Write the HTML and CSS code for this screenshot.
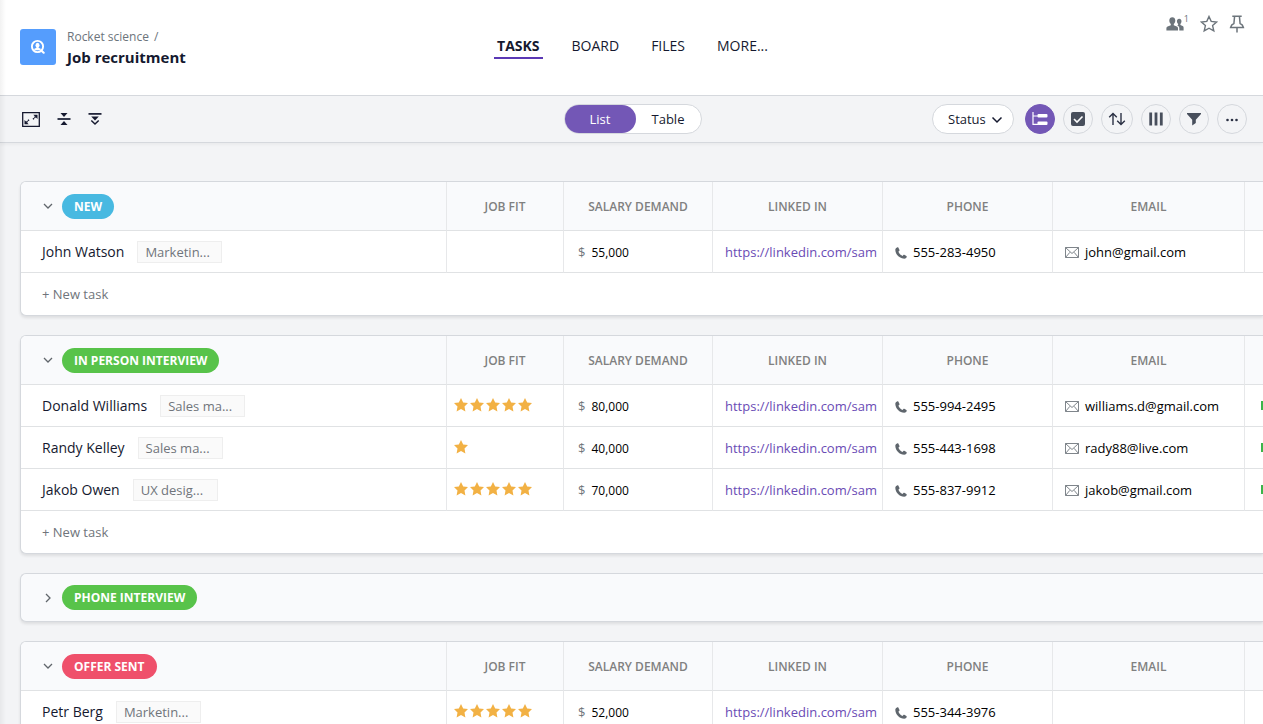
FILE: index.html
```html
<!DOCTYPE html>
<html lang="en">
  <head>
    <title>Job recruitment</title>
    <meta charset="utf-8">
    <link rel="stylesheet" href="styles.css">
  </head>
  <body>
    <!-- shared icons -->
    <svg class="sprite" aria-hidden="true">
      <symbol id="star" viewBox="0 0 14 14"><path d="M7 0l2.200 4.500 4.800.6-3.500 3.400.9 4.900L7 11.100l-4.400 2.300.9-4.900L0 5.100l4.800-.6z" fill="#f2b144"/></symbol>
      <symbol id="phone" viewBox="0 0 12 12"><path d="M2.400.3C1.300.7.3 1.700.3 2.700.4 7.400 4.600 11.700 9.300 11.700c1.100 0 2-.8 2.400-1.700.1-.4 0-.7-.3-.9L9.300 7.800c-.3-.2-.7-.1-.9.1l-.9 1C5.700 8.200 4.100 6.500 3.400 4.700l.9-.9c.3-.2.300-.5.200-.8L3.300.6C3.100.3 2.800.2 2.400.3z" fill="#5f666d"/></symbol>
      <symbol id="mail" viewBox="0 0 14 11"><path d="M.5.5h13v10H.5zM.5.5L7 6.500 13.500.5M.7 10.300l4.200-5M13.300 10.300l-4.200-5" fill="none" stroke="#70777e" stroke-width=".9"/></symbol>
      <symbol id="down" viewBox="0 0 10 10"><path d="M1 3l4 4 4-4" fill="none" stroke="#61666c" stroke-width="1.300"/></symbol>
      <symbol id="right" viewBox="0 0 10 10"><path d="M3 1l4 4-4 4" fill="none" stroke="#61666c" stroke-width="1.300"/></symbol>
    </svg>

    <header class="header">
      <div class="project">
        <div class="project-icon">
          <svg width="16" height="16" viewBox="0 0 16 16"><circle cx="7.500" cy="7.500" r="5.600" fill="none" stroke="#fff" stroke-width="1.900"/><path d="M11.500 11.700l2.200 2" stroke="#fff" stroke-width="2.200" stroke-linecap="round"/><ellipse cx="7.500" cy="6.200" rx="2" ry="2.500" fill="#fff"/><path d="M6.600 7h1.800v1.800l2.300 1v1.400H4.300V9.800l2.300-1z" fill="#fff"/></svg>
        </div>
        <div>
          <div class="crumbs"><a href="#">Rocket science</a> <span>/</span></div>
          <h1 class="title">Job recruitment</h1>
        </div>
      </div>
      <nav class="tabs">
        <a href="#" class="tab active">TASKS</a>
        <a href="#" class="tab">BOARD</a>
        <a href="#" class="tab">FILES</a>
        <a href="#" class="tab">MORE...</a>
      </nav>
      <div class="actions">
        <button class="icon-btn people" aria-label="Members">
          <svg width="18" height="16" viewBox="0 0 18 16"><g fill="#6c747b"><path d="M3.300 4.500C3.300 2.400 4.500 1.200 6.300 1.200s3 1.200 3 3.300c0 1.500-.6 2.700-1.500 3.500v1.200l3 1.300c.9.400 1.200 1 1.200 2V14.500H.4v-2c0-1 .4-1.600 1.300-2l3.100-1.300V8c-.9-.8-1.500-2-1.500-3.500z"/><path d="M10.900 5.300c0-1.600.9-2.600 2.300-2.600s2.300 1 2.300 2.600c0 1.100-.4 2-1.100 2.600V9l2.200 1c.8.400 1 .9 1 1.700v2.800h-4.300v-2.300c0-1.100-.5-1.900-1.500-2.400l-.7-.3 1-.4V7.900c-.8-.6-1.200-1.500-1.200-2.600z"/></g></svg>
          <sup>1</sup>
        </button>
        <button class="icon-btn" aria-label="Favorite">
          <svg width="18" height="18" viewBox="0 0 18 18"><path d="M9 1.500l2.200 4.900 5.400.6-4 3.600 1.200 5.300L9 13.200l-4.800 2.700 1.200-5.300-4-3.600 5.400-.6z" fill="none" stroke="#6c747b" stroke-width="1.400"/></svg>
        </button>
        <button class="icon-btn" aria-label="Pin">
          <svg width="16" height="18" viewBox="0 0 16 18"><path d="M3.300 1.200h9.400M5.600 1.200L4.900 8.500C3 9.200 2 10.500 1.600 12.500h12.800C14 10.500 13 9.200 11.100 8.500l-.7-7.300M8 12.500V17.500" fill="none" stroke="#6c747b" stroke-width="1.500"/></svg>
        </button>
      </div>
    </header>

    <div class="toolbar">
      <div class="tools-left">
        <button class="icon-btn" aria-label="Full screen">
          <svg width="18" height="15" viewBox="0 0 18 15"><path d="M.7.7h16.600v13.600H.7z" fill="none" stroke="#15192f" stroke-width="1.300"/><path d="M11.300 2.700h4.200v4.200zM2.500 8.100v4.200h4.200z" fill="#15192f"/><path d="M11 7.200l3-3M7 7.800l-3 3" stroke="#15192f" stroke-width="1.400" stroke-dasharray="1.500 .5"/></svg>
        </button>
        <button class="icon-btn" aria-label="Collapse all">
          <svg width="14" height="14" viewBox="0 0 14 14"><path d="M.5 7h13" stroke="#15192f" stroke-width="1.700"/><path d="M3.500 1h7L7 5zM3.500 13h7L7 9z" fill="#15192f"/></svg>
        </button>
        <button class="icon-btn" aria-label="Expand all">
          <svg width="14" height="14" viewBox="0 0 14 14"><path d="M.5 1.900h13" stroke="#15192f" stroke-width="1.700"/><path d="M3.200 4.500h7.600L7 8.500z" fill="#15192f"/><path d="M3.300 8.500L7 12l3.700-3.500" fill="none" stroke="#15192f" stroke-width="1.500"/></svg>
        </button>
      </div>
      <div class="switch">
        <button class="switch-btn on">List</button>
        <button class="switch-btn">Table</button>
      </div>
      <div class="tools-right">
        <div class="status">
          <select aria-label="Group by"><option>Status</option></select>
          <svg width="12" height="12" viewBox="0 0 12 12"><path d="M1.500 4.500L6 9l4.500-4.500" fill="none" stroke="#15192f" stroke-width="1.500"/></svg>
        </div>
        <button class="round on" aria-label="Subtasks">
          <svg width="18" height="16" viewBox="0 0 18 16"><path d="M2 1v12.300h5M2 5h5" fill="none" stroke="#fff" stroke-width="1.200"/><rect x="6.500" y="3" width="10" height="3.500" rx="1" fill="#fff"/><rect x="6.500" y="10.500" width="10" height="3.500" rx="1" fill="#fff"/></svg>
        </button>
        <button class="round" aria-label="Select tasks">
          <svg width="14" height="14" viewBox="0 0 14 14"><rect width="14" height="14" rx="2" fill="#484f5c"/><path d="M3 7l3 3 5.500-5.500" fill="none" stroke="#fff" stroke-width="1.600"/></svg>
        </button>
        <button class="round sort" aria-label="Sort">
          <svg width="18" height="14" viewBox="0 0 18 14"><path d="M5 13V1.500M1.200 5.300L5 1.500l3.800 3.800M13 1v11.500M9.200 8.700l3.800 3.800 3.800-3.800" fill="none" stroke="#2b3144" stroke-width="1.400"/></svg>
        </button>
        <button class="round" aria-label="Columns">
          <svg width="14" height="14" viewBox="0 0 14 14"><path d="M1.700.5v13M7 .5v13M12.300.5v13" stroke="#484f5c" stroke-width="2.800"/></svg>
        </button>
        <button class="round" aria-label="Filter">
          <svg width="14" height="14" viewBox="0 0 14 14"><path d="M0 1h14v1L8.800 7.800V11l-3.600 2.500V7.800L0 2z" fill="#484f5c"/></svg>
        </button>
        <button class="round" aria-label="More">
          <svg width="14" height="14" viewBox="0 0 14 14"><g fill="#2b3144"><circle cx="2.500" cy="8" r="1.300"/><circle cx="7" cy="8" r="1.300"/><circle cx="11.500" cy="8" r="1.300"/></g></svg>
        </button>
      </div>
    </div>

    <main class="board">
      <section class="group">
        <table>
          <colgroup><col><col class="c-fit"><col class="c-salary"><col class="c-link"><col class="c-phone"><col class="c-email"><col class="c-more"></colgroup>
          <thead>
            <tr>
              <th><div class="group-head"><button class="toggle" aria-label="Collapse"><svg width="10" height="10"><use href="#down"/></svg></button><span class="pill blue">NEW</span></div></th>
              <th>JOB FIT</th><th>SALARY DEMAND</th><th>LINKED IN</th><th>PHONE</th><th>EMAIL</th><th></th>
            </tr>
          </thead>
          <tbody>
            <tr>
              <td><div class="name">John Watson <span class="tag">Marketin...</span></div></td>
              <td></td>
              <td><span class="cur">$</span>55,000</td>
              <td><a class="link" href="#">https://linkedin.com/sam</a></td>
              <td><div class="contact"><svg width="12" height="12"><use href="#phone"/></svg>555-283-4950</div></td>
              <td><div class="contact"><svg width="14" height="11"><use href="#mail"/></svg>john@gmail.com</div></td>
              <td></td>
            </tr>
          </tbody>
        </table>
        <button class="new-task">+ New task</button>
      </section>

      <section class="group">
        <table>
          <colgroup><col><col class="c-fit"><col class="c-salary"><col class="c-link"><col class="c-phone"><col class="c-email"><col class="c-more"></colgroup>
          <thead>
            <tr>
              <th><div class="group-head"><button class="toggle" aria-label="Collapse"><svg width="10" height="10"><use href="#down"/></svg></button><span class="pill green">IN PERSON INTERVIEW</span></div></th>
              <th>JOB FIT</th><th>SALARY DEMAND</th><th>LINKED IN</th><th>PHONE</th><th>EMAIL</th><th></th>
            </tr>
          </thead>
          <tbody>
            <tr>
              <td><div class="name">Donald Williams <span class="tag">Sales ma...</span></div></td>
              <td><div class="stars"><svg><use href="#star"/></svg><svg><use href="#star"/></svg><svg><use href="#star"/></svg><svg><use href="#star"/></svg><svg><use href="#star"/></svg></div></td>
              <td><span class="cur">$</span>80,000</td>
              <td><a class="link" href="#">https://linkedin.com/sam</a></td>
              <td><div class="contact"><svg width="12" height="12"><use href="#phone"/></svg>555-994-2495</div></td>
              <td><div class="contact"><svg width="14" height="11"><use href="#mail"/></svg>williams.d@gmail.com</div></td>
              <td><div class="bar"></div></td>
            </tr>
            <tr>
              <td><div class="name">Randy Kelley <span class="tag">Sales ma...</span></div></td>
              <td><div class="stars"><svg><use href="#star"/></svg></div></td>
              <td><span class="cur">$</span>40,000</td>
              <td><a class="link" href="#">https://linkedin.com/sam</a></td>
              <td><div class="contact"><svg width="12" height="12"><use href="#phone"/></svg>555-443-1698</div></td>
              <td><div class="contact"><svg width="14" height="11"><use href="#mail"/></svg>rady88@live.com</div></td>
              <td><div class="bar"></div></td>
            </tr>
            <tr>
              <td><div class="name">Jakob Owen <span class="tag">UX desig...</span></div></td>
              <td><div class="stars"><svg><use href="#star"/></svg><svg><use href="#star"/></svg><svg><use href="#star"/></svg><svg><use href="#star"/></svg><svg><use href="#star"/></svg></div></td>
              <td><span class="cur">$</span>70,000</td>
              <td><a class="link" href="#">https://linkedin.com/sam</a></td>
              <td><div class="contact"><svg width="12" height="12"><use href="#phone"/></svg>555-837-9912</div></td>
              <td><div class="contact"><svg width="14" height="11"><use href="#mail"/></svg>jakob@gmail.com</div></td>
              <td><div class="bar"></div></td>
            </tr>
          </tbody>
        </table>
        <button class="new-task">+ New task</button>
      </section>

      <section class="group closed">
        <div class="group-head"><button class="toggle" aria-label="Expand"><svg width="10" height="10"><use href="#right"/></svg></button><span class="pill green">PHONE INTERVIEW</span></div>
      </section>

      <section class="group">
        <table>
          <colgroup><col><col class="c-fit"><col class="c-salary"><col class="c-link"><col class="c-phone"><col class="c-email"><col class="c-more"></colgroup>
          <thead>
            <tr>
              <th><div class="group-head"><button class="toggle" aria-label="Collapse"><svg width="10" height="10"><use href="#down"/></svg></button><span class="pill red">OFFER SENT</span></div></th>
              <th>JOB FIT</th><th>SALARY DEMAND</th><th>LINKED IN</th><th>PHONE</th><th>EMAIL</th><th></th>
            </tr>
          </thead>
          <tbody>
            <tr>
              <td><div class="name">Petr Berg <span class="tag">Marketin...</span></div></td>
              <td><div class="stars"><svg><use href="#star"/></svg><svg><use href="#star"/></svg><svg><use href="#star"/></svg><svg><use href="#star"/></svg><svg><use href="#star"/></svg></div></td>
              <td><span class="cur">$</span>52,000</td>
              <td><a class="link" href="#">https://linkedin.com/sam</a></td>
              <td><div class="contact"><svg width="12" height="12"><use href="#phone"/></svg>555-344-3976</div></td>
              <td></td>
              <td></td>
            </tr>
          </tbody>
        </table>
      </section>
    </main>
  </body>
</html>
```

FILE: styles.css
```css
*{
  box-sizing: border-box;
}

body{
  margin: 0;
  height: 100vh;
  display: flex;
  flex-direction: column;
  overflow: hidden;
  background: #f3f4f6;
  color: #15192f;
  font-family: "Open Sans", "Noto Sans", sans-serif;
  font-size: 14px;
}

/* shade along the left edge of the page */
body::after{
  content: "";
  position: absolute;
  top: 0;
  bottom: 0;
  left: 0;
  width: 6px;
  background: linear-gradient(to right, rgba(0,0,0,.05), rgba(0,0,0,0));
  pointer-events: none;
}

a{
  color: inherit;
  text-decoration: none;
}

button, select{
  font: inherit;
  color: inherit;
  border: 0;
  padding: 0;
  background: none;
  cursor: pointer;
}

svg{
  display: block;
  flex: none;
}

.sprite{
  position: absolute;
  width: 0;
  height: 0;
}

.header{
  flex: none;
  display: grid;
  grid-template-columns: 1fr auto 1fr;
  height: 95px;
  padding: 0 18px 2px 20px;
  background: #fff;
}

.project{
  display: flex;
  align-items: center;
  gap: 11px;
}

.project-icon{
  width: 36px;
  height: 36px;
  padding: 10px;
  border-radius: 3px;
  background: #559dfd;
}

.crumbs{
  color: #6c747b;
  font-size: 12px;
  line-height: 20px;
}

.crumbs span{
  margin-left: 2px;
}

.title{
  margin: 0;
  font-size: 15px;
  line-height: 20px;
}

.tabs{
  display: flex;
  align-items: center;
  gap: 26px;
}

.tab{
  padding: 0 3px;
  line-height: 22px;
  border-bottom: 2px solid transparent;
}

.active{
  font-weight: 700;
  border-color: #5a38b4;
}

.actions{
  display: flex;
  justify-content: flex-end;
  align-items: center;
  align-self: start;
  gap: 11px;
  padding-top: 15px;
}

.people{
  display: flex;
}

.people sup{
  font-size: 9px;
  line-height: 6px;
  color: #6c747b;
}

.toolbar{
  flex: none;
  display: grid;
  grid-template-columns: 1fr auto 1fr;
  align-items: center;
  height: 48px;
  padding: 0 16px 0 18px;
  border-top: 1px solid #d5d8dd;
  border-bottom: 1px solid #d5d8dd;
  box-shadow: 0 2px 3px rgba(0,0,0,.04);
}

.tools-left, .tools-right{
  display: flex;
  align-items: center;
}

.tools-left{
  gap: 17px;
  padding-left: 4px;
}

.tools-right{
  justify-content: flex-end;
  gap: 8px;
}

.switch{
  display: flex;
  border: 1px solid #d5d8dd;
  border-radius: 15px;
  background: #fff;
  font-size: 13px;
}

.switch-btn{
  width: 65px;
  height: 28px;
  border-radius: 14px;
}

.switch-btn.on{
  width: 71px;
  background: #7357b6;
  color: #fff;
}

.status{
  display: flex;
  align-items: center;
  height: 30px;
  margin-right: 3px;
  padding: 0 10px 0 15px;
  border: 1px solid #d5d8dd;
  border-radius: 15px;
  background: #fff;
  font-size: 13px;
}

.status select{
  appearance: none;
  width: 43px;
}

.round{
  display: flex;
  align-items: center;
  justify-content: center;
  width: 30px;
  height: 30px;
  border: 1px solid #d5d8dd;
  border-radius: 16px;
}

.round.on{
  border-color: #7357b6;
  background: #7357b6;
}

.sort{
  width: 32px;
}

.board{
  flex: 1;
  min-height: 0;
  padding: 38px 0 0 20px;
}

.group{
  margin-bottom: 19px;
  overflow: hidden;
  border: 1px solid #d5d8dd;
  border-right: 0;
  border-radius: 6px 0 0 6px;
  background: #fff;
  box-shadow: 0 2px 3px rgba(0,0,0,.09);
}

/* the last column runs out past the right edge */
table{
  width: calc(100% + 100px);
  table-layout: fixed;
  border-collapse: separate;
  border-spacing: 0;
}

.c-fit{ width: 117px; }
.c-salary{ width: 149px; }
.c-link{ width: 170px; }
.c-phone{ width: 170px; }
.c-email{ width: 192px; }
.c-more{ width: 119px; }

th, td{
  padding: 0 12px;
  border-left: 1px solid #e7e8ea;
  border-bottom: 1px solid #e0e2e4;
}

th:first-child, td:first-child{
  padding: 0 21px;
  border-left: 0;
}

th{
  height: 49px;
  background: #f9fafc;
  color: #808080;
  font-size: 12px;
  font-weight: 600;
}

td{
  height: 42px;
  color: #000;
  font-size: 13px;
}

td:nth-child(2){
  padding: 0 7px 2px;
}

td:nth-child(3){
  padding: 0 14px;
  font-size: 12px;
}

td:nth-child(4){
  padding-right: 4px;
}

td:last-child{
  padding: 0 16px;
}

.group-head{
  display: flex;
  align-items: center;
  gap: 8px;
}

.closed{
  padding: 11px 21px;
  background: #f9fafc;
}

.pill{
  padding: 0 12px;
  border-radius: 13px;
  color: #fff;
  font-size: 12px;
  font-weight: 700;
  line-height: 25px;
}

.blue{ background: #48b9e1; }
.green{ background: #58c34a; }
.red{ background: #ef506b; }

.name{
  display: flex;
  align-items: center;
  gap: 13px;
  color: #15192f;
  font-size: 14px;
}

.tag{
  width: 85px;
  padding: 0 7px;
  border: 1px solid #eeeeee;
  background: #fafafa;
  color: #70757b;
  font-size: 13px;
  line-height: 20px;
}

.stars{
  display: flex;
  gap: 2px;
}

.stars svg{
  width: 14px;
  height: 14px;
}

.cur{
  margin-right: 6px;
  color: #70757b;
  font-size: 13px;
}

.link{
  display: block;
  overflow: hidden;
  color: #6a4bb5;
  white-space: nowrap;
}

.contact{
  display: flex;
  align-items: center;
  gap: 6px;
}

.contact svg{
  margin-top: 2px;
}

.bar{
  height: 9px;
  background: #3bb54a;
}

.new-task{
  display: block;
  width: 100%;
  height: 42px;
  padding-left: 21px;
  color: #70757b;
  font-size: 13px;
  text-align: left;
}

.toggle{
  padding: 1px;
}
```
